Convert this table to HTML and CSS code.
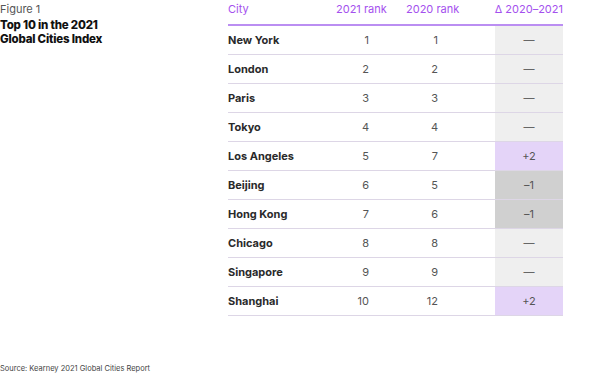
FILE: index.html
```html
<!DOCTYPE html>
<html>
<head>
<meta charset="utf-8">
<link rel="stylesheet" href="styles.css">
</head>
<body>
<div class="page">
  <div class="main">
    <div class="caption">
      <div class="fig">Figure 1</div>
      <div class="title">Top 10 in the 2021<br>Global Cities Index</div>
    </div>
    <div class="table">
      <div class="row head">
        <div class="c city">City</div>
        <div class="c r1">2021 rank</div>
        <div class="c r2">2020 rank</div>
        <div class="c d">Δ 2020–2021</div>
      </div>
      <div class="row"><div class="c city">New York</div><div class="c r1">1</div><div class="c r2">1</div><div class="c d same">—</div></div>
      <div class="row"><div class="c city">London</div><div class="c r1">2</div><div class="c r2">2</div><div class="c d same">—</div></div>
      <div class="row"><div class="c city">Paris</div><div class="c r1">3</div><div class="c r2">3</div><div class="c d same">—</div></div>
      <div class="row"><div class="c city">Tokyo</div><div class="c r1">4</div><div class="c r2">4</div><div class="c d same">—</div></div>
      <div class="row"><div class="c city">Los Angeles</div><div class="c r1">5</div><div class="c r2">7</div><div class="c d up">+2</div></div>
      <div class="row"><div class="c city">Beijing</div><div class="c r1">6</div><div class="c r2">5</div><div class="c d down">–1</div></div>
      <div class="row"><div class="c city">Hong Kong</div><div class="c r1">7</div><div class="c r2">6</div><div class="c d down">–1</div></div>
      <div class="row"><div class="c city">Chicago</div><div class="c r1">8</div><div class="c r2">8</div><div class="c d same">—</div></div>
      <div class="row"><div class="c city">Singapore</div><div class="c r1">9</div><div class="c r2">9</div><div class="c d same">—</div></div>
      <div class="row"><div class="c city">Shanghai</div><div class="c r1">10</div><div class="c r2">12</div><div class="c d up">+2</div></div>
    </div>
  </div>
  <div class="source">Source: Kearney 2021 Global Cities Report</div>
</div>
</body>
</html>
```
FILE: styles.css
```css
* { box-sizing: border-box; }
html, body { margin: 0; padding: 0; background: #fff; }
body { font-family: Inter, "Noto Sans", sans-serif; color: #222; }
.page { width: 600px; height: 377px; display: flex; flex-direction: column; }
.main { display: grid; grid-template-columns: 228px 335px; }
.caption { padding-top: 2px; }
.fig { font-size: 11px; color: #555; line-height: 14px; }
.title { font-size: 11.5px; font-weight: 800; color: #111; line-height: 14px; letter-spacing: -0.2px; margin-top: 2px; }
.table { display: flex; flex-direction: column; }
.row { display: grid; grid-template-columns: 108px 70px 89px 68px; height: 29px; border-bottom: 1px solid #ddd6e6; font-size: 11px; }
.row.head { height: 26px; border-bottom: 2px solid #bb8ef2; color: #a450ee; align-items: start; }
.c { display: flex; align-items: center; white-space: nowrap; }
.head .c { align-items: flex-start; padding-top: 2px; }
.city { font-weight: 700; color: #2a2a2a; }
.head .city { font-weight: 400; color: #a450ee; }
.r1 { justify-content: flex-end; padding-right: 37px; color: #555; }
.r2 { justify-content: flex-end; padding-right: 57px; color: #555; }
.head .r1, .head .r2 { justify-content: flex-start; padding-right: 0; color: #a450ee; }
.d { justify-content: center; color: #555; }
.head .d { justify-content: flex-end; color: #a450ee; }
.same { background: #efefef; color: #666; }
.up { background: #e4d4f8; }
.down { background: #d0d0d0; }
.source { margin-top: auto; margin-bottom: 4px; font-size: 7.5px; color: #444; }
```
